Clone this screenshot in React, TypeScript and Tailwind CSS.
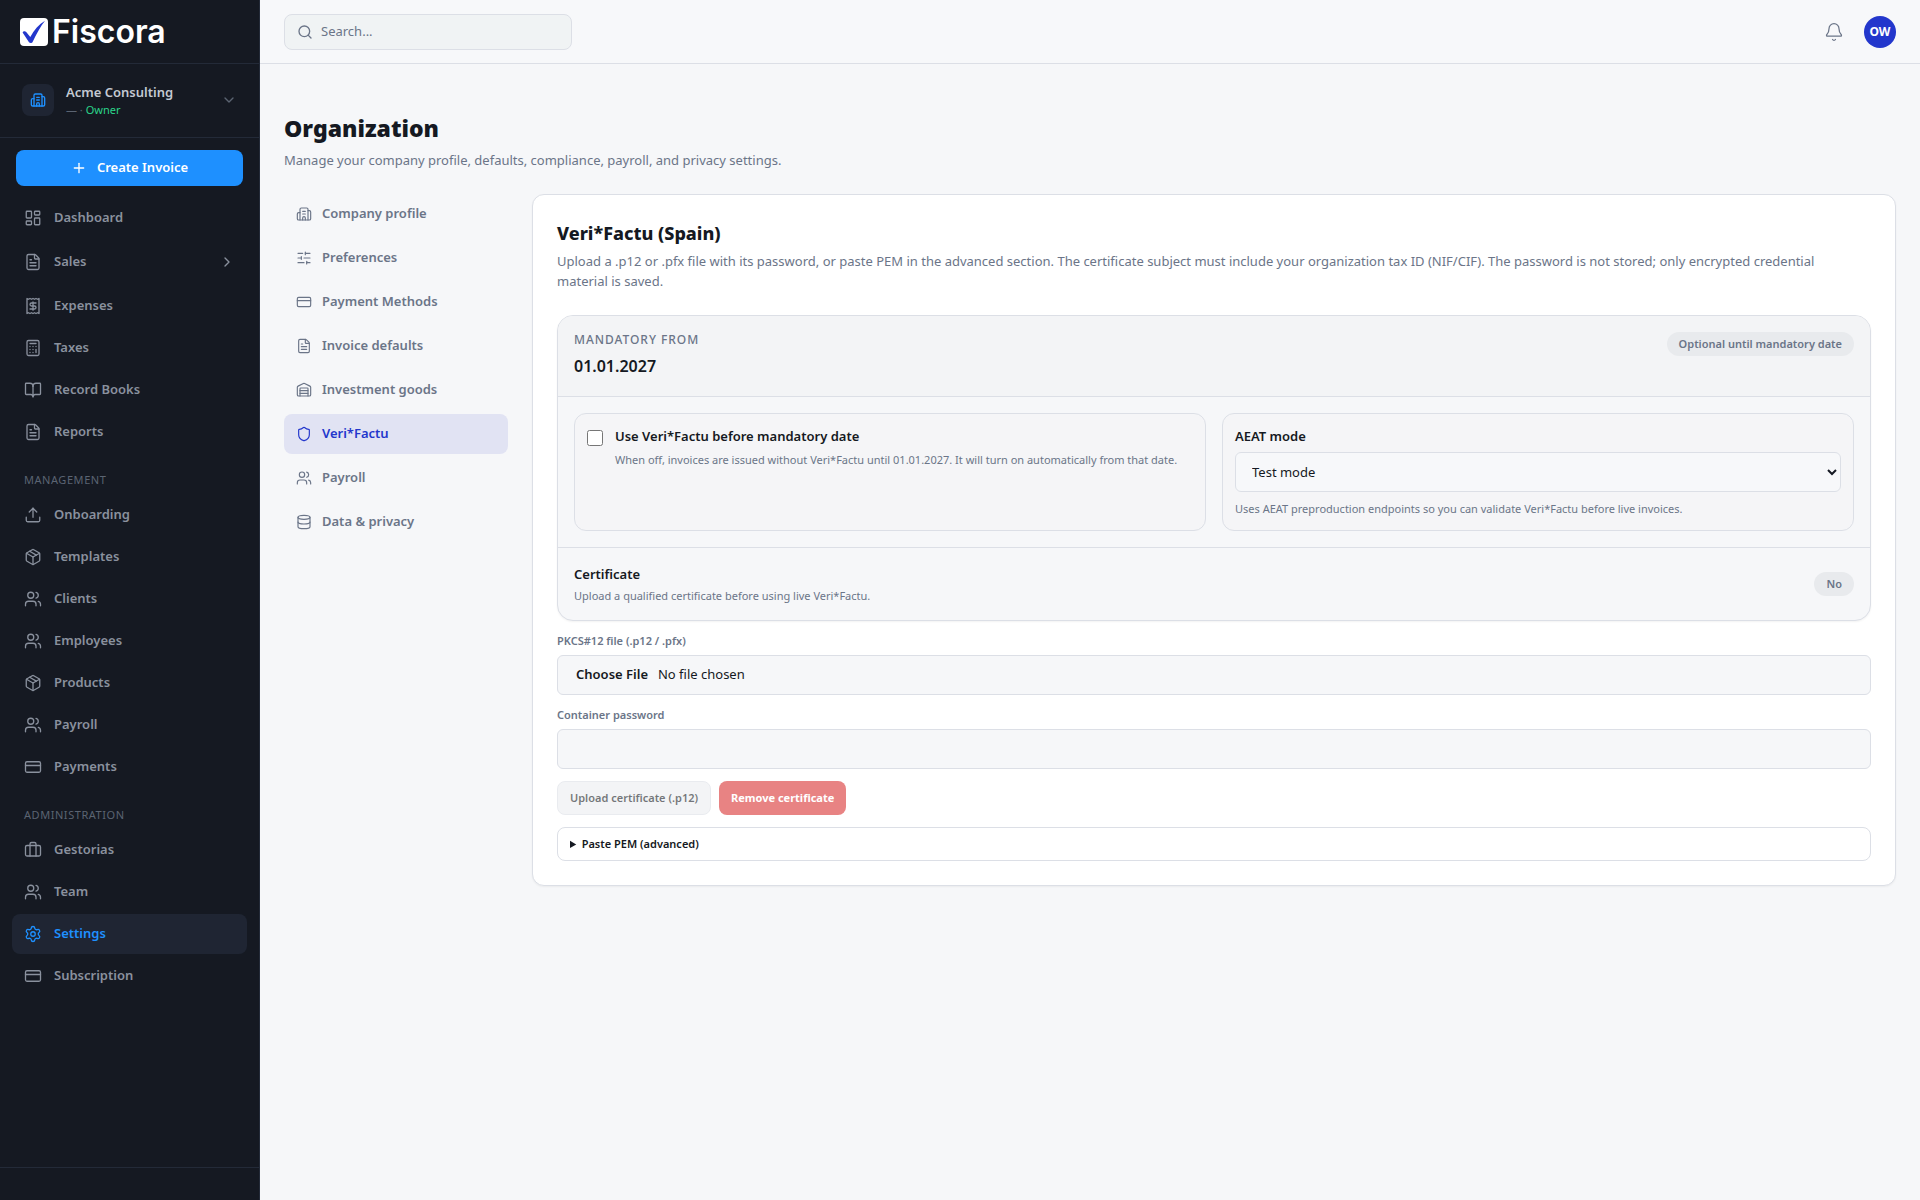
import { useState } from 'react'
import {
  Bell,
  BookOpen,
  Briefcase,
  Building2,
  Calculator,
  ChevronDown,
  ChevronRight,
  CreditCard,
  Database,
  FileText,
  LayoutDashboard,
  Package,
  Plus,
  Search,
  Settings,
  Shield,
  SlidersHorizontal,
  Upload,
  Users,
  Warehouse,
  type LucideIcon,
} from 'lucide-react'

type NavEntry = { label: string; icon: any; active?: boolean; expandable?: boolean }

function ReceiptIcon({ className }: { className?: string; strokeWidth?: number }) {
  return (
    <svg
      viewBox="0 0 24 24"
      fill="none"
      stroke="currentColor"
      strokeWidth={1.75}
      strokeLinecap="round"
      strokeLinejoin="round"
      className={className}
    >
      <path d="M4 2v20l2-1 2 1 2-1 2 1 2-1 2 1 2-1 2 1V2l-2 1-2-1-2 1-2-1-2 1-2-1-2 1Z" />
      <path d="M16 8h-6a2 2 0 1 0 0 4h4a2 2 0 1 1 0 4H8" />
      <path d="M12 17.5v-11" />
    </svg>
  )
}

const mainLinks: NavEntry[] = [
  { label: 'Dashboard', icon: LayoutDashboard },
  { label: 'Sales', icon: FileText, expandable: true },
  { label: 'Expenses', icon: ReceiptIcon },
  { label: 'Taxes', icon: Calculator },
  { label: 'Record Books', icon: BookOpen },
  { label: 'Reports', icon: FileText },
]

const managementLinks: NavEntry[] = [
  { label: 'Onboarding', icon: Upload },
  { label: 'Templates', icon: Package },
  { label: 'Clients', icon: Users },
  { label: 'Employees', icon: Users },
  { label: 'Products', icon: Package },
  { label: 'Payroll', icon: Users },
  { label: 'Payments', icon: CreditCard },
]

const adminLinks: NavEntry[] = [
  { label: 'Gestorias', icon: Briefcase },
  { label: 'Team', icon: Users },
  { label: 'Settings', icon: Settings, active: true },
  { label: 'Subscription', icon: CreditCard },
]

const sections: { label: string; icon: LucideIcon }[] = [
  { label: 'Company profile', icon: Building2 },
  { label: 'Preferences', icon: SlidersHorizontal },
  { label: 'Payment Methods', icon: CreditCard },
  { label: 'Invoice defaults', icon: FileText },
  { label: 'Investment goods', icon: Warehouse },
  { label: 'Veri*Factu', icon: Shield },
  { label: 'Payroll', icon: Users },
  { label: 'Data & privacy', icon: Database },
]

function Logo() {
  return (
    <a href="#" className="flex items-center gap-1 text-white">
      <svg viewBox="0 0 28 28" className="h-7 w-7">
        <rect width="28" height="28" rx="4" fill="#fff" />
        <path
          d="M2.600 14.500C3.200 13.200 5 12.600 6.200 14L10.300 19C14 12 19 6.500 25 2.800 20.500 8.500 16.500 16 12.600 24 12 25.200 9.800 25.300 9 24.200Z"
          fill="#2337cc"
        />
      </svg>
      <span className="font-[Inter] text-[32px] leading-8 font-semibold">Fiscora</span>
    </a>
  )
}

function SidebarLink({ item }: { item: NavEntry }) {
  const Icon = item.icon
  return (
    <a
      href="#"
      className={`flex items-center gap-3 rounded-lg px-3 text-[13px] font-semibold ${
        item.expandable ? 'h-11' : 'h-10'
      } ${item.active ? 'bg-[#1f2533] text-[#1e90ff]' : 'text-[#8a919e]'}`}
    >
      <Icon className="h-[18px] w-[18px]" strokeWidth={1.75} />
      <span className="flex-1">{item.label}</span>
      {item.expandable && <ChevronRight className="h-4 w-4" />}
    </a>
  )
}

function SidebarGroup({ title, items }: { title: string; items: NavEntry[] }) {
  return (
    <div className="flex flex-col gap-0.5">
      <h2 className="px-3 pt-5 pb-[5px] text-[11px] leading-4 tracking-wider text-[#5b6472] uppercase">{title}</h2>
      {items.map((item) => (
        <SidebarLink key={item.label} item={item} />
      ))}
    </div>
  )
}

function Sidebar() {
  return (
    <aside className="flex w-[260px] shrink-0 flex-col border-r border-[#232a38] bg-[#151922]">
      <div className="flex h-16 items-center border-b border-[#232a38] px-5">
        <Logo />
      </div>
      <div className="flex h-[74px] items-center border-b border-[#232a38] px-3 pb-0.5">
        <button className="flex w-full items-center gap-3 px-2.5 text-left">
          <span className="flex h-8 w-8 items-center justify-center rounded-lg bg-[#1f2533] text-[#1e90ff]">
            <Building2 className="h-4 w-4" />
          </span>
          <span className="flex-1">
            <span className="block text-[13px] leading-5 font-semibold text-[#c4c9d2]">Acme Consulting</span>
            <span className="block text-[11px] leading-4 text-[#5b6472]">
              — · <span className="text-[#2bd48a]">Owner</span>
            </span>
          </span>
          <ChevronDown className="h-4 w-4 text-[#5b6472]" />
        </button>
      </div>
      <div className="px-4 pt-3">
        <button className="flex h-9 w-full items-center justify-center gap-2.5 rounded-lg bg-[#1e90ff] text-[13px] font-semibold text-white">
          <Plus className="h-4 w-4" />
          Create Invoice
        </button>
      </div>
      <nav className="flex flex-1 flex-col px-3 pt-3">
        <div className="flex flex-col gap-0.5">
          {mainLinks.map((item) => (
            <SidebarLink key={item.label} item={item} />
          ))}
        </div>
        <SidebarGroup title="Management" items={managementLinks} />
        <SidebarGroup title="Administration" items={adminLinks} />
      </nav>
      <div className="h-[33px] border-t border-[#232a38]" />
    </aside>
  )
}

function Topbar() {
  return (
    <header className="flex h-16 items-center justify-between border-b border-[#dcdfe6] bg-[#f7f8fa] px-6">
      <label className="flex h-9 w-72 items-center gap-2 rounded-lg border border-[#dcdfe6] bg-[#f0f3f4] px-3 text-[#6b7588]">
        <Search className="h-4 w-4" />
        <input
          type="search"
          aria-label="Search"
          placeholder="Search..."
          className="min-w-0 flex-1 bg-transparent text-[13px] outline-none placeholder:text-[#6b7588]"
        />
      </label>
      <div className="flex items-center gap-5">
        <button aria-label="Notifications" className="text-[#6b7588]">
          <Bell className="h-5 w-5" strokeWidth={1.5} />
        </button>
        <button className="h-8 w-8 rounded-full bg-[#2337cc] text-xs font-bold text-white">OW</button>
      </div>
    </header>
  )
}

function Badge({ children }: { children: string }) {
  return (
    <span className="flex h-6 items-center rounded-full bg-[#e8eaed] px-3 text-[11px] font-semibold text-[#6b7588]">
      {children}
    </span>
  )
}

function StatusPanel() {
  const [early, setEarly] = useState(false)

  return (
    <div className="overflow-hidden rounded-2xl border border-[#dcdfe6] bg-[#f6f7f9] shadow-xs">
      <div className="flex items-start justify-between border-b border-[#dcdfe6] bg-[#f3f4f6] p-4 pb-[18px]">
        <div>
          <p className="text-xs leading-4 font-medium tracking-[0.08em] text-[#6b7588] uppercase">Mandatory from</p>
          <p className="mt-1.5 text-base leading-6 font-semibold">01.01.2027</p>
        </div>
        <Badge>Optional until mandatory date</Badge>
      </div>

      <div className="grid grid-cols-2 gap-4 border-b border-[#dcdfe6] p-4">
        <label className="flex items-start gap-3 rounded-xl border border-[#dcdfe6] bg-[#f5f5f7] p-3">
          <input
            type="checkbox"
            checked={early}
            onChange={(e) => setEarly(e.target.checked)}
            className="mt-1 h-4 w-4"
          />
          <span>
            <span className="block text-[13px] leading-5 font-semibold">Use Veri*Factu before mandatory date</span>
            <span className="mt-1 block text-[11px] leading-5 text-[#6b7588]">
              When off, invoices are issued without Veri*Factu until 01.01.2027. It will turn on automatically from
              that date.
            </span>
          </span>
        </label>
        <div className="rounded-xl border border-[#dcdfe6] bg-[#f5f5f7] p-3">
          <label htmlFor="aeat-mode" className="block text-[13px] leading-5 font-semibold">
            AEAT mode
          </label>
          <select
            id="aeat-mode"
            className="mt-1.5 h-10 w-full rounded-md border border-[#dcdfe6] bg-[#f7f8fa] px-3 text-[13px]"
          >
            <option>Test mode</option>
            <option>Live mode</option>
          </select>
          <p className="mt-2 text-[11px] leading-[18px] text-[#6b7588]">
            Uses AEAT preproduction endpoints so you can validate Veri*Factu before live invoices.
          </p>
        </div>
      </div>

      <div className="flex items-center justify-between p-4">
        <div>
          <p className="text-[13px] leading-5 font-semibold">Certificate</p>
          <p className="mt-1 text-[11px] leading-4 text-[#6b7588]">
            Upload a qualified certificate before using live Veri*Factu.
          </p>
        </div>
        <Badge>No</Badge>
      </div>
    </div>
  )
}

function VerifactuCard() {
  return (
    <section className="min-w-0 flex-1 rounded-xl border border-[#dcdfe6] bg-white p-6 shadow-xs">
      <h2 className="text-lg leading-7 font-extrabold">Veri*Factu (Spain)</h2>
      <p className="mt-1 pr-4 text-[13px] leading-5 text-[#6b7588]">
        Upload a .p12 or .pfx file with its password, or paste PEM in the advanced section. The certificate subject
        must include your organization tax ID (NIF/CIF). The password is not stored; only encrypted credential
        material is saved.
      </p>

      <div className="mt-6">
        <StatusPanel />
      </div>

      <form className="mt-3 flex flex-col gap-3">
        <div>
          <label htmlFor="p12-file" className="block text-[11px] leading-4 font-semibold text-[#6b7588]">
            PKCS#12 file (.p12 / .pfx)
          </label>
          <input
            id="p12-file"
            type="file"
            className="mt-1.5 h-10 w-full rounded-md border border-[#dcdfe6] bg-[#f6f7f9] px-3 py-2 text-[13px] leading-5 file:mr-1 file:px-1.5 file:font-semibold"
          />
        </div>
        <div>
          <label htmlFor="p12-password" className="block text-[11px] leading-4 font-semibold text-[#6b7588]">
            Container password
          </label>
          <input
            id="p12-password"
            type="password"
            className="mt-1.5 h-10 w-full rounded-md border border-[#dcdfe6] bg-[#f6f7f9] px-3 text-[13px]"
          />
        </div>
        <div className="flex gap-2 text-[11px]">
          <button
            type="button"
            disabled
            className="h-[34px] rounded-lg border border-[#dcdfe6] bg-[#eceef1] px-3 font-semibold text-[#151922] opacity-60"
          >
            Upload certificate (.p12)
          </button>
          <button type="button" disabled className="h-[34px] rounded-lg bg-[#e88383] px-3 font-bold text-white">
            Remove certificate
          </button>
        </div>
        <details className="rounded-lg border border-[#dcdfe6] px-3 py-2 text-[11px] leading-4">
          <summary className="font-semibold">Paste PEM (advanced)</summary>
          <textarea aria-label="PEM" rows={6} className="mt-2 w-full rounded-md border border-[#dcdfe6] p-2" />
        </details>
      </form>
    </section>
  )
}

export default function App() {
  const [section, setSection] = useState('Veri*Factu')

  return (
    <div className="flex min-h-screen bg-[#f6f7f9] font-['Noto_Sans','Open_Sans',sans-serif] text-[#151922]">
      <Sidebar />
      <div className="min-w-0 flex-1">
        <Topbar />
        <main className="px-6 pt-12">
          <h1 className="text-[23px] leading-8 font-black">Organization</h1>
          <p className="mt-1.5 text-[13px] leading-5 text-[#6b7588]">
            Manage your company profile, defaults, compliance, payroll, and privacy settings.
          </p>

          <div className="mt-6 flex items-start gap-6">
            <nav className="flex w-56 shrink-0 flex-col gap-1">
              {sections.map(({ label, icon: Icon }) => (
                <button
                  key={label}
                  onClick={() => setSection(label)}
                  className={`flex h-10 items-center gap-2.5 rounded-lg px-3 text-[13px] font-semibold ${
                    section === label ? 'bg-[#e1e3f3] text-[#2337cc]' : 'text-[#6b7588]'
                  }`}
                >
                  <Icon className="h-4 w-4" strokeWidth={1.75} />
                  {label}
                </button>
              ))}
            </nav>
            <VerifactuCard />
          </div>
        </main>
      </div>
    </div>
  )
}
